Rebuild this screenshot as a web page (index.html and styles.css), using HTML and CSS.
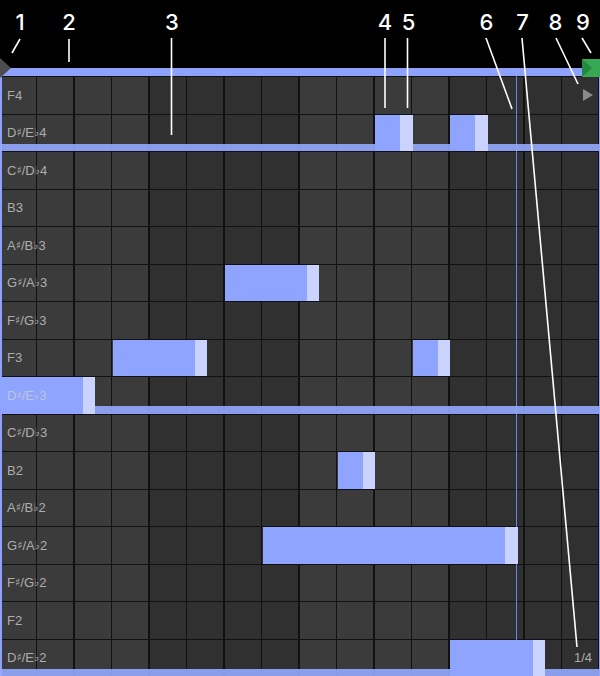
FILE: index.html
```html
<!DOCTYPE html>
<html>
<head>
<meta charset="utf-8">
<link rel="stylesheet" href="styles.css">
</head>
<body>
<div class="screen">
  <div class="header">
    <span class="loop-start"></span>
    <svg class="loop-end" width="18" height="18" viewBox="0 0 18 18"><rect width="18" height="18" fill="#37a956"/><polygon points="0,0 10,9 0,18" fill="#248a40"/></svg>
  </div>
  <div class="top-band"></div>
  <div class="roll">
    <div class="vlines"></div>
    <div class="edge edge-left"></div>
    <div class="edge edge-right"></div>
    <div class="playhead"></div>

    <div class="row"><span class="label">F4</span><span class="play-tri"></span></div>
    <div class="row band"><span class="label">D<small>♯</small>/E<small>♭</small>4</span>
      <div class="note" style="left:375px;width:37.5px"></div>
      <div class="note" style="left:450px;width:37.5px"></div>
    </div>
    <div class="row"><span class="label">C<small>♯</small>/D<small>♭</small>4</span></div>
    <div class="row"><span class="label">B3</span></div>
    <div class="row"><span class="label">A<small>♯</small>/B<small>♭</small>3</span></div>
    <div class="row"><span class="label">G<small>♯</small>/A<small>♭</small>3</span>
      <div class="note" style="left:225px;width:94px"></div>
    </div>
    <div class="row"><span class="label">F<small>♯</small>/G<small>♭</small>3</span></div>
    <div class="row"><span class="label">F3</span>
      <div class="note" style="left:112.5px;width:94.5px"></div>
      <div class="note" style="left:412.5px;width:37.5px"></div>
    </div>
    <div class="row band"><span class="label">D<small>♯</small>/E<small>♭</small>3</span>
      <div class="note" style="left:0;width:95px"></div>
    </div>
    <div class="row"><span class="label">C<small>♯</small>/D<small>♭</small>3</span></div>
    <div class="row"><span class="label">B2</span>
      <div class="note" style="left:337.5px;width:37.5px"></div>
    </div>
    <div class="row"><span class="label">A<small>♯</small>/B<small>♭</small>2</span></div>
    <div class="row"><span class="label">G<small>♯</small>/A<small>♭</small>2</span>
      <div class="note" style="left:262.5px;width:255px"></div>
    </div>
    <div class="row"><span class="label">F<small>♯</small>/G<small>♭</small>2</span></div>
    <div class="row"><span class="label">F2</span></div>
    <div class="row band"><span class="label">D<small>♯</small>/E<small>♭</small>2</span><span class="grid-size">1/4</span>
      <div class="note" style="left:450px;width:95px"></div>
    </div>
  </div>

  <svg class="annotations" width="600" height="676" viewBox="0 0 600 676">
    <g class="callout-lines">
      <line x1="20" y1="39" x2="12" y2="53"/>
      <line x1="69" y1="39" x2="69" y2="62"/>
      <line x1="171.5" y1="38" x2="171.5" y2="135"/>
      <line x1="385" y1="38" x2="385" y2="108"/>
      <line x1="407.5" y1="38" x2="407.5" y2="108"/>
      <line x1="486" y1="38" x2="512" y2="109"/>
      <line x1="522" y1="38" x2="577" y2="647"/>
      <line x1="556" y1="38" x2="578" y2="84"/>
      <line x1="582" y1="38" x2="591" y2="53"/>
    </g>
    <g class="callout-nums">
      <text x="20" y="30">1</text>
      <text x="69" y="30">2</text>
      <text x="172" y="30">3</text>
      <text x="385" y="30">4</text>
      <text x="408.5" y="30">5</text>
      <text x="486.5" y="30">6</text>
      <text x="522.5" y="30">7</text>
      <text x="555.5" y="30">8</text>
      <text x="583" y="30">9</text>
    </g>
  </svg>
</div>
</body>
</html>
```

FILE: styles.css
```css
html, body {
  margin: 0;
  padding: 0;
  background: #000;
}

.screen {
  position: relative;
  width: 600px;
  height: 676px;
  overflow: hidden;
  background: #000;
  font-family: "Liberation Sans", Arial, "DejaVu Sans", sans-serif;
}

.header {
  height: 68px;
  background: #000;
}

.loop-start {
  position: absolute;
  left: 0;
  top: 58px;
  width: 0;
  height: 0;
  border-left: 11px solid #4d4d4d;
  border-top: 10px solid transparent;
  border-bottom: 10px solid transparent;
  z-index: 5;
}

.loop-end {
  position: absolute;
  left: 582px;
  top: 59px;
  z-index: 5;
  display: block;
}

.top-band {
  height: 8px;
  background: #8ea1fb;
}

.roll {
  position: relative;
  z-index: 0;
  width: 600px;
  height: 600px;
  background: linear-gradient(to right,
    #3b3b3b 0, #3b3b3b 150px,
    #303030 150px, #303030 300px,
    #3b3b3b 300px, #3b3b3b 450px,
    #303030 450px, #303030 600px);
}

.vlines {
  position: absolute;
  inset: 0;
  z-index: 1;
  background: repeating-linear-gradient(to right,
    transparent 0, transparent 36px,
    #111 36px, #111 37.5px);
}

.edge {
  position: absolute;
  top: 0;
  bottom: 0;
  width: 1.5px;
  background: #8ea1fb;
  z-index: 2;
}
.edge-left { left: 0; }
.edge-right { right: 0; }

.playhead {
  position: absolute;
  top: 0;
  bottom: 0;
  left: 516px;
  width: 1px;
  background: #6c80f0;
  z-index: 1;
}

.row {
  position: relative;
  box-sizing: border-box;
  height: 37.5px;
  border-top: 1.5px solid #111;
  display: flex;
  align-items: center;
  padding: 0 7px;
}

.row.band::after {
  content: "";
  position: absolute;
  left: 0;
  right: 0;
  bottom: 0;
  height: 7.5px;
  background: rgba(149, 170, 255, 0.9);
  z-index: 2;
}

.label {
  position: relative;
  z-index: 4;
  font-size: 13px;
  color: rgba(205, 205, 205, 0.8);
  white-space: nowrap;
}

.label small {
  font-family: "DejaVu Sans", sans-serif;
  font-size: 11px;
  position: relative;
  top: -1px;
}

.play-tri {
  position: relative;
  z-index: 4;
  margin-left: auto;
  width: 0;
  height: 0;
  border-left: 10px solid #8a8a8a;
  border-top: 6px solid transparent;
  border-bottom: 6px solid transparent;
}

.grid-size {
  position: relative;
  z-index: 4;
  margin-left: auto;
  margin-right: 1px;
  font-size: 13px;
  color: rgba(205, 205, 205, 0.8);
}

.note {
  position: absolute;
  top: 0;
  bottom: 0;
  background: #8fa4ff;
  z-index: 3;
}

.note::after {
  content: "";
  position: absolute;
  top: 0;
  bottom: 0;
  right: 0;
  width: 12.5px;
  background: #c9d3fe;
}

.annotations {
  position: absolute;
  left: 0;
  top: 0;
  z-index: 10;
  pointer-events: none;
}

.callout-lines line {
  stroke: #fff;
  stroke-width: 1.6;
}

.callout-nums text {
  fill: #fff;
  font-family: Inter, "Liberation Sans", sans-serif;
  font-weight: 500;
  font-size: 22px;
  text-anchor: middle;
}
```
